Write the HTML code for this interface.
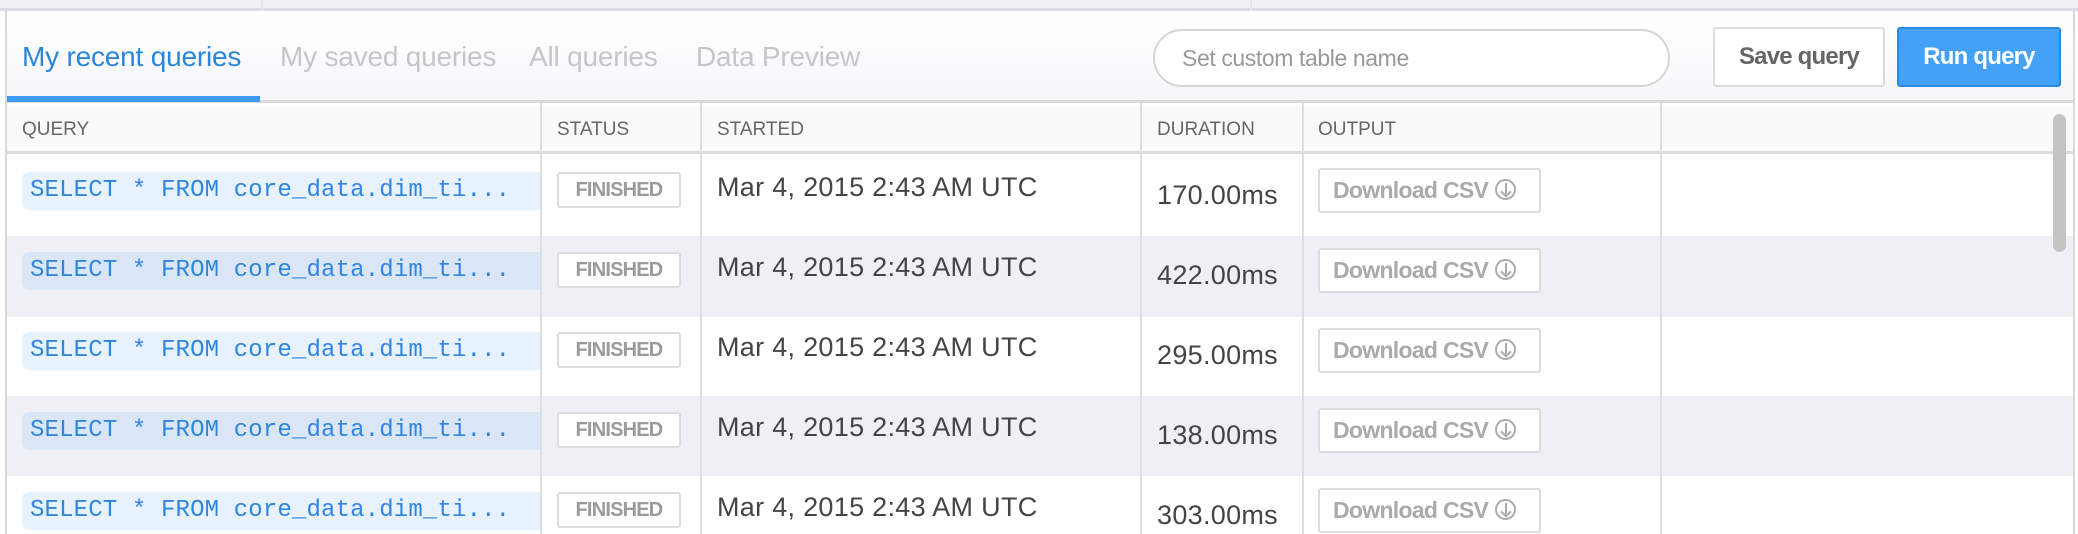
<!DOCTYPE html>
<html><head><meta charset="utf-8"><style>
*{box-sizing:border-box;margin:0;padding:0}
body{width:2078px;height:534px;overflow:hidden;background:#fff;font-family:"Liberation Sans",sans-serif;position:relative}
.a{position:absolute}
.top{left:0;top:0;width:2078px;height:11px;background:#eff0f5;border-bottom:3px solid #dcdde2}
.panel{left:5px;top:11px;width:2070px;height:523px;border-left:2px solid #d8d8d8;border-right:2px solid #d8d8d8;background:#fff}
.tabbar{left:7px;top:14px;width:2066px;height:89px;background:linear-gradient(#fff,#f6f7f9);border-bottom:3px solid #dcdcdc}
.tab{top:41px;font-size:28px;letter-spacing:-0.2px;color:#c6c6c8;white-space:nowrap}
.hdr{left:7px;top:106px;width:2066px;height:48px;background:#fafafb;border-bottom:3px solid #dcdcdc}
.ht{top:119px;font-size:19px;color:#666}
.vl{top:103px;width:2px;height:431px;background:#dedede}
.row{left:7px;width:2066px;height:81px}
.pill{left:22px;width:519px;height:38px;border-radius:7px 0 0 7px;font-family:"Liberation Mono",monospace;font-size:24px;color:#2f86e0;line-height:38px;padding-left:8px;white-space:nowrap;letter-spacing:0.15px}
.badge{left:557px;width:124px;height:36px;border:2px solid #dcdcdc;border-radius:3px;background:#fff;font-size:20px;font-weight:bold;color:#9b9b9b;text-align:center;line-height:32px;letter-spacing:-0.8px}
.st{left:717px;font-size:27px;color:#444;white-space:nowrap;letter-spacing:0.3px}
.du{left:1157px;font-size:27px;color:#444;letter-spacing:0.3px}
.dl{left:1318px;width:223px;height:45px;border:2px solid #dcdcdc;border-radius:3px;background:#fff;font-size:23px;font-weight:bold;color:#aaa;line-height:41px;padding-left:13px;letter-spacing:-0.7px;white-space:nowrap}
.ic{display:inline-block;width:21px;height:21px;border:2px solid #aaa;border-radius:50%;vertical-align:-2px;margin-left:7px;position:relative}
.ic:before{content:"";position:absolute;left:7.5px;top:2px;width:2px;height:11px;background:#aaa}
.ic:after{content:"";position:absolute;left:4.5px;top:7px;width:6px;height:6px;border-right:2px solid #aaa;border-bottom:2px solid #aaa;transform:rotate(45deg)}
</style></head><body>
<div class="a top"></div>
<div class="a" style="left:261px;top:0;width:2px;height:11px;background:#e4e5ea"></div>
<div class="a" style="left:1250px;top:0;width:2px;height:11px;background:#e4e5ea"></div>
<div class="a panel"></div>
<div class="a tabbar"></div>
<div class="a tab" style="left:22px;color:#2a86dd">My recent queries</div>
<div class="a tab" style="left:280px">My saved queries</div>
<div class="a tab" style="left:529px">All queries</div>
<div class="a tab" style="left:696px">Data Preview</div>
<div class="a" style="left:7px;top:96px;width:253px;height:6px;background:#3d9cf5"></div>
<div class="a" style="left:1153px;top:29px;width:517px;height:58px;border:2px solid #d6d6d6;border-radius:29px;background:#fff;font-size:23px;color:#999;line-height:54px;padding-left:27px;letter-spacing:-0.4px">Set custom table name</div>
<div class="a" style="left:1713px;top:27px;width:172px;height:60px;border:2px solid #dcdcdc;border-radius:3px;background:#fff;font-size:24px;font-weight:bold;color:#666;text-align:center;line-height:56px;letter-spacing:-0.8px">Save query</div>
<div class="a" style="left:1897px;top:27px;width:164px;height:60px;border:2px solid #2a88e0;border-radius:3px;background:#44a1f8;font-size:24px;font-weight:bold;color:#fff;text-align:center;line-height:56px;letter-spacing:-0.8px">Run query</div>
<div class="a hdr"></div>
<div class="a ht" style="left:22px">QUERY</div>
<div class="a ht" style="left:557px">STATUS</div>
<div class="a ht" style="left:717px">STARTED</div>
<div class="a ht" style="left:1157px">DURATION</div>
<div class="a ht" style="left:1318px">OUTPUT</div>

<div class="a row" style="top:236px;background:#eff0f5"></div>
<div class="a row" style="top:396px;background:#eff0f5;height:80px"></div>

<div class="a pill" style="top:172px;background:#e7f2fe">SELECT * FROM core_data.dim_ti...</div>
<div class="a pill" style="top:252px;background:#dae6f6">SELECT * FROM core_data.dim_ti...</div>
<div class="a pill" style="top:332px;background:#e7f2fe">SELECT * FROM core_data.dim_ti...</div>
<div class="a pill" style="top:412px;background:#dae6f6">SELECT * FROM core_data.dim_ti...</div>
<div class="a pill" style="top:492px;background:#e7f2fe">SELECT * FROM core_data.dim_ti...</div>

<div class="a badge" style="top:172px">FINISHED</div>
<div class="a badge" style="top:252px">FINISHED</div>
<div class="a badge" style="top:332px">FINISHED</div>
<div class="a badge" style="top:412px">FINISHED</div>
<div class="a badge" style="top:492px">FINISHED</div>

<div class="a st" style="top:172px">Mar 4, 2015 2:43 AM UTC</div>
<div class="a st" style="top:252px">Mar 4, 2015 2:43 AM UTC</div>
<div class="a st" style="top:332px">Mar 4, 2015 2:43 AM UTC</div>
<div class="a st" style="top:412px">Mar 4, 2015 2:43 AM UTC</div>
<div class="a st" style="top:492px">Mar 4, 2015 2:43 AM UTC</div>

<div class="a du" style="top:180px">170.00ms</div>
<div class="a du" style="top:260px">422.00ms</div>
<div class="a du" style="top:340px">295.00ms</div>
<div class="a du" style="top:420px">138.00ms</div>
<div class="a du" style="top:500px">303.00ms</div>

<div class="a dl" style="top:168px">Download CSV<span class="ic"></span></div>
<div class="a dl" style="top:248px">Download CSV<span class="ic"></span></div>
<div class="a dl" style="top:328px">Download CSV<span class="ic"></span></div>
<div class="a dl" style="top:408px">Download CSV<span class="ic"></span></div>
<div class="a dl" style="top:488px">Download CSV<span class="ic"></span></div>

<div class="a vl" style="left:540px"></div>
<div class="a vl" style="left:700px"></div>
<div class="a vl" style="left:1140px"></div>
<div class="a vl" style="left:1302px"></div>
<div class="a vl" style="left:1660px"></div>
<div class="a" style="left:2053px;top:114px;width:13px;height:138px;border-radius:7px;background:#c4c4c4"></div>
</body></html>
